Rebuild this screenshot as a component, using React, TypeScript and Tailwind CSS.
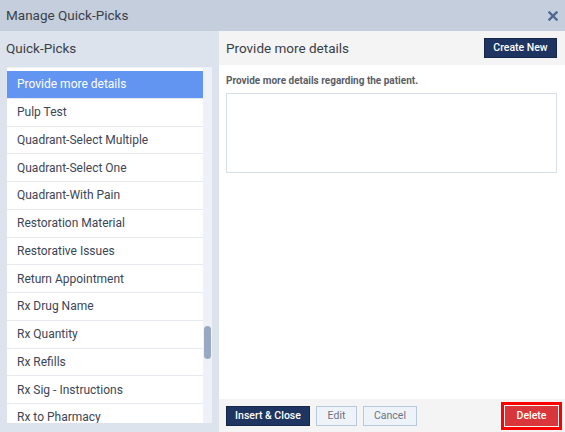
import React from 'react';

const items = [
  'Provide more details',
  'Pulp Test',
  'Quadrant-Select Multiple',
  'Quadrant-Select One',
  'Quadrant-With Pain',
  'Restoration Material',
  'Restorative Issues',
  'Return Appointment',
  'Rx Drug Name',
  'Rx Quantity',
  'Rx Refills',
  'Rx Sig - Instructions',
  'Rx to Pharmacy',
];

export default function App() {
  return (
    <div
      className="w-[565px] h-[432px] flex flex-col overflow-hidden bg-white text-[#333]"
      style={{ fontFamily: 'Roboto, "Liberation Sans", sans-serif' }}
    >
      {/* title bar */}
      <div className="h-[31px] shrink-0 bg-[#c5cedd] flex items-center justify-between pl-[6px] pr-[7px]">
        <span className="text-[13.5px] text-[#3a3f48]">Manage Quick-Picks</span>
        <svg width="10" height="10" viewBox="0 0 10 10">
          <path d="M1.5 1.5 L8.5 8.5 M8.5 1.5 L1.5 8.5" stroke="#4d6a8d" strokeWidth="2.4" strokeLinecap="square" />
        </svg>
      </div>

      <div className="flex flex-1 min-h-0">
        {/* left panel */}
        <div className="w-[219px] shrink-0 bg-[#dde3ec] flex flex-col">
          <div className="h-[34px] shrink-0 flex items-center px-[6px] text-[13.5px] text-[#3a3f48]">Quick-Picks</div>
          <div className="flex-1 min-h-0 flex px-[7px] pt-[2px] pb-[9px] bg-[#dde3ec]">
            <div className="flex-1 bg-white pt-[3px] overflow-hidden border-t border-[#eef1f6]">
              {items.map((it, i) => (
                <div
                  key={it}
                  className={
                    i === 0
                      ? 'h-[27.75px] flex items-center px-[10px] text-[12px] bg-[#6295f2] text-white border-b border-[#e6eaf0]'
                      : 'h-[27.75px] flex items-center px-[10px] text-[12px] text-[#3c4656] border-b border-[#e6eaf0]'
                  }
                >
                  {it}
                </div>
              ))}
            </div>
            <div className="w-[9px] bg-[#eef1f8] relative">
              <div className="absolute left-[1px] w-[7px] top-[259px] h-[33px] rounded-full bg-[#9aa9c2]" />
            </div>
          </div>
        </div>

        {/* right panel */}
        <div className="flex-1 flex flex-col min-w-0">
          <div className="h-[34px] shrink-0 bg-[#f4f4f4] flex items-center justify-between pl-[7px] pr-[8px]">
            <span className="text-[13.5px] text-[#3a3f48]">Provide more details</span>
            <button className="h-[20px] w-[73px] bg-[#1e3461] text-white text-[10.5px] font-medium border border-[#15264a]">
              Create New
            </button>
          </div>
          <div className="flex-1 bg-white px-[7px] pt-[9px]">
            <div className="text-[10px] font-bold text-[#5a5e66] leading-[14px]">
              Provide more details regarding the patient.
            </div>
            <div className="mt-[5px] h-[80px] border border-[#d7dfea] bg-white mr-[1px]" />
          </div>
          <div className="h-[33px] shrink-0 bg-[#f4f4f4] flex items-center pl-[7px] pr-[3px]">
            <button className="h-[20px] w-[84px] bg-[#1e3461] text-white text-[10.5px] font-medium border border-[#15264a]">
              Insert &amp; Close
            </button>
            <button className="ml-[6px] h-[20px] w-[41px] bg-[#eef3f9] text-[#6a7380] text-[10.5px] border border-[#b9c9dd]">
              Edit
            </button>
            <button className="ml-[6px] h-[20px] w-[54px] bg-[#eef3f9] text-[#6a7380] text-[10.5px] border border-[#b9c9dd]">
              Cancel
            </button>
            <div className="ml-auto border-[3px] border-[#ff0000] p-[1px]">
              <button className="h-[20px] w-[53px] bg-[#d9363b] text-white text-[10.5px] font-medium block">
                Delete
              </button>
            </div>
          </div>
        </div>
      </div>
    </div>
  );
}
